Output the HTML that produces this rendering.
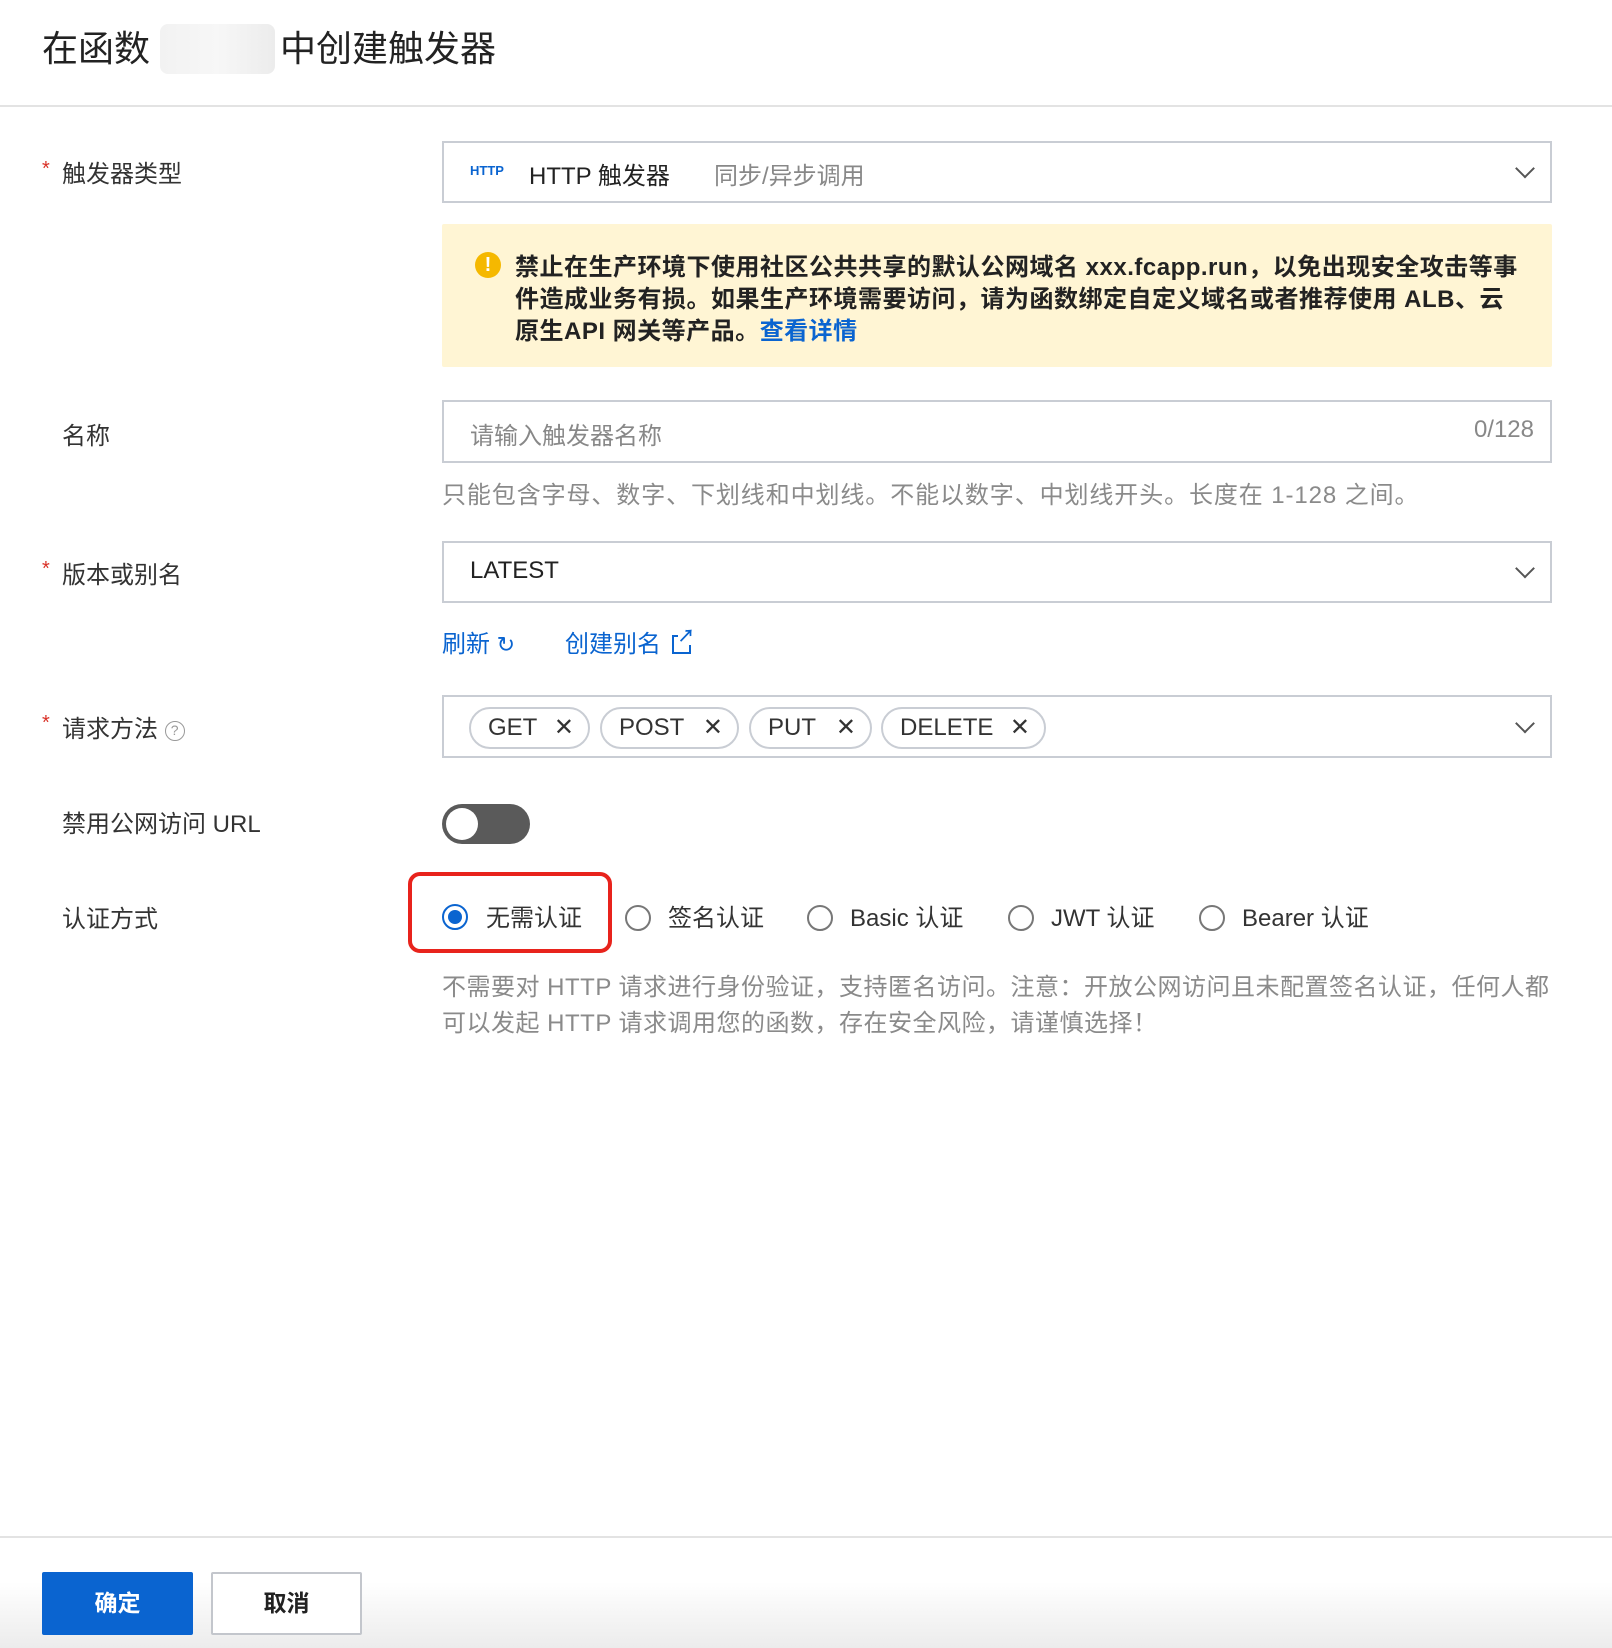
<!DOCTYPE html>
<html><head><meta charset="utf-8"><style>
*{margin:0;padding:0;box-sizing:border-box}
body{width:1612px;height:1648px;background:#fff;font-family:"Liberation Sans","Noto Sans CJK SC",sans-serif;color:#333;position:relative;overflow:hidden}
.a{position:absolute;white-space:nowrap}
.title{left:42px;top:20px;font-size:36px;color:#222}
.blur{left:160px;top:24px;width:115px;height:50px;background:linear-gradient(90deg,#f2f2f2,#f7f7f7,#ececec);border-radius:8px}
.hl{left:0;top:105px;width:1612px;height:2px;background:#e3e3e3}
.lab{font-size:24px;color:#333;left:62px}
.star{left:42px;color:#d93026;font-size:20px}
.box{left:442px;width:1110px;border:2px solid #c9cdd4;background:#fff}
.chev{position:absolute;right:18px;top:50%;width:14px;height:14px;border-right:2px solid #555;border-bottom:2px solid #555;transform:translateY(-75%) rotate(45deg)}
.alert{left:442px;top:224px;width:1110px;height:143px;background:#fff5d4;border-radius:2px}
.at{left:515px;font-size:24px;font-weight:bold;color:#222;letter-spacing:0.5px}
.help{font-size:24px;color:#8a8a8a}
.tag{position:absolute;top:10px;height:42px;border:2px solid #c9cdd4;border-radius:22px;font-size:24px;line-height:38px;padding-left:17px;color:#333}
.tag i{position:absolute;right:14px;top:0;font-style:normal;font-size:24px}
.radio{position:absolute;width:26px;height:26px;border:2px solid #777;border-radius:50%;top:905px}
.rt{top:898px;font-size:24px;color:#333}
.link{color:#0a64d0;font-size:24px;top:624px}
</style></head><body>
<div class="a title">在函数</div>
<div class="a blur"></div>
<div class="a title" style="left:280px">中创建触发器</div>
<div class="a hl"></div>

<div class="a star" style="top:158px">*</div>
<div class="a lab" style="top:154px">触发器类型</div>
<div class="a box" style="top:141px;height:62px">
 <span class="a" style="left:26px;top:20px;font-size:13px;font-weight:bold;color:#0a64d0">HTTP</span>
 <span class="a" style="left:85px;top:13px;font-size:24px;color:#222">HTTP 触发器</span>
 <span class="a" style="left:270px;top:13px;font-size:24px;color:#888">同步/异步调用</span>
 <div class="chev"></div>
</div>
<div class="a alert"></div>
<div class="a" style="left:475px;top:252px;width:26px;height:26px;border-radius:50%;background:#f5b800;color:#fff;font-weight:bold;text-align:center;line-height:26px;font-size:20px">!</div>
<div class="a at" style="top:247px">禁止在生产环境下使用社区公共共享的默认公网域名 xxx.fcapp.run，以免出现安全攻击等事</div>
<div class="a at" style="top:279px">件造成业务有损。如果生产环境需要访问，请为函数绑定自定义域名或者推荐使用 ALB、云</div>
<div class="a at" style="top:311px">原生API 网关等产品。<span style="color:#0a64d0">查看详情</span></div>

<div class="a lab" style="top:416px">名称</div>
<div class="a box" style="top:400px;height:63px">
 <span class="a" style="left:26px;top:14px;font-size:24px;color:#888">请输入触发器名称</span>
 <span class="a" style="right:16px;top:14px;font-size:24px;color:#888">0/128</span>
</div>
<div class="a help" style="left:442px;top:475px;letter-spacing:0.9px">只能包含字母、数字、下划线和中划线。不能以数字、中划线开头。长度在 1-128 之间。</div>

<div class="a star" style="top:558px">*</div>
<div class="a lab" style="top:555px">版本或别名</div>
<div class="a box" style="top:541px;height:62px">
 <span class="a" style="left:26px;top:14px;font-size:24px;color:#222">LATEST</span>
 <div class="chev"></div>
</div>
<div class="a link" style="left:442px">刷新 <span style="font-size:22px">↻</span></div>
<div class="a link" style="left:565px">创建别名 <span style="display:inline-block;width:19px;height:19px;border:2.5px solid #0a64d0;vertical-align:-2px;margin-left:4px;position:relative"><span style="position:absolute;right:-6px;top:-9px;font-size:17px;font-weight:bold;background:#fff;line-height:17px">↗</span></span></div>

<div class="a star" style="top:712px">*</div>
<div class="a lab" style="top:709px">请求方法 <span style="display:inline-block;width:20px;height:20px;border:1.5px solid #999;border-radius:50%;font-size:14px;color:#999;text-align:center;line-height:17px;vertical-align:2px">?</span></div>
<div class="a box" style="top:695px;height:63px">
 <div class="tag" style="left:25px;width:121px">GET<i>✕</i></div>
 <div class="tag" style="left:156px;width:139px">POST<i>✕</i></div>
 <div class="tag" style="left:305px;width:123px">PUT<i>✕</i></div>
 <div class="tag" style="left:437px;width:165px">DELETE<i>✕</i></div>
 <div class="chev"></div>
</div>

<div class="a lab" style="top:804px">禁用公网访问 URL</div>
<div class="a" style="left:442px;top:804px;width:88px;height:40px;border-radius:20px;background:#5a5a5a"><div style="position:absolute;left:4px;top:4px;width:32px;height:32px;border-radius:50%;background:#fff"></div></div>

<div class="a lab" style="top:899px">认证方式</div>
<div class="a" style="left:408px;top:872px;width:204px;height:81px;border:4px solid #e8231c;border-radius:12px"></div>
<div class="radio" style="left:442px;top:904px;border-color:#0a64d0"><div style="position:absolute;left:4px;top:4px;width:14px;height:14px;border-radius:50%;background:#0a64d0"></div></div>
<div class="a rt" style="left:486px">无需认证</div>
<div class="radio" style="left:625px"></div><div class="a rt" style="left:668px">签名认证</div>
<div class="radio" style="left:807px"></div><div class="a rt" style="left:850px">Basic 认证</div>
<div class="radio" style="left:1008px"></div><div class="a rt" style="left:1051px">JWT 认证</div>
<div class="radio" style="left:1199px"></div><div class="a rt" style="left:1242px">Bearer 认证</div>
<div class="a help" style="left:442px;top:967px;letter-spacing:0.5px">不需要对 HTTP 请求进行身份验证，支持匿名访问。注意：开放公网访问且未配置签名认证，任何人都</div>
<div class="a help" style="left:442px;top:1003px;letter-spacing:0.5px">可以发起 HTTP 请求调用您的函数，存在安全风险，请谨慎选择！</div>

<div class="a" style="left:0;top:1536px;width:1612px;height:2px;background:#e3e3e3"></div>
<div class="a" style="left:0;top:1538px;width:1612px;height:110px;background:linear-gradient(#fff,#fff 40%,#ececec)"></div>
<div class="a" style="left:42px;top:1572px;width:151px;height:63px;background:#0a64d0;border-radius:2px;color:#fff;font-size:23px;font-weight:bold;text-align:center;line-height:63px">确定</div>
<div class="a" style="left:211px;top:1572px;width:151px;height:63px;background:#fff;border:2px solid #c3c6cc;border-radius:2px;color:#222;font-size:23px;font-weight:bold;text-align:center;line-height:59px">取消</div>
</body></html>
